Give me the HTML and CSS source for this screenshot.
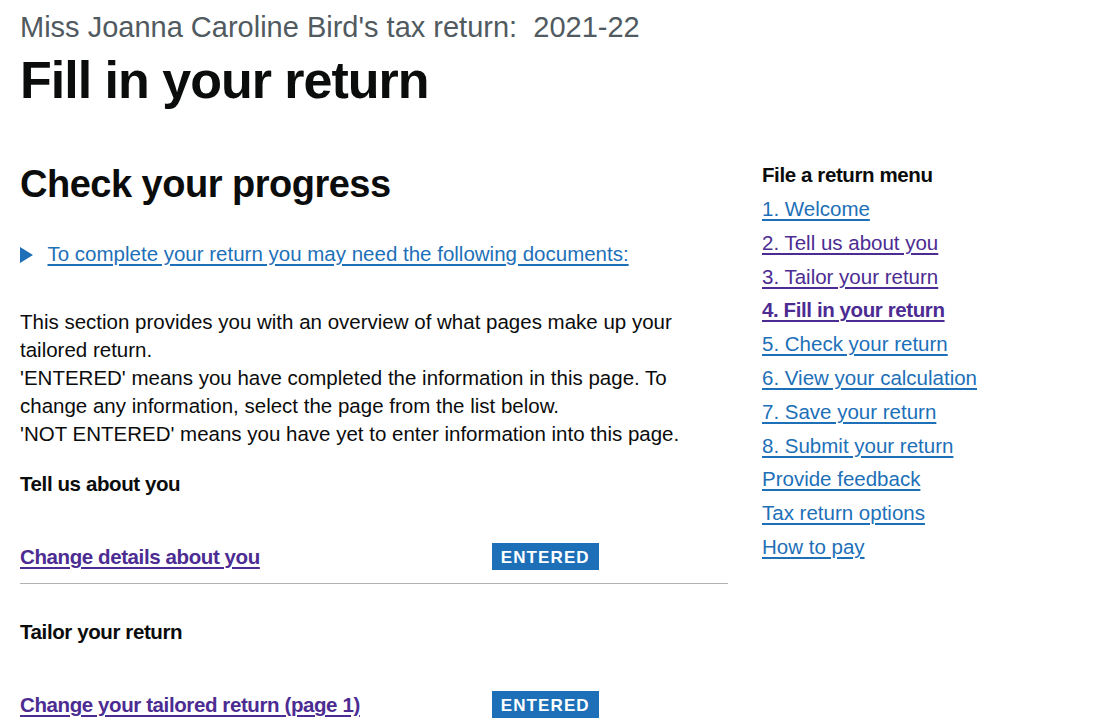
FILE: index.html
```html
<!DOCTYPE html>
<html lang="en">
<head>
    <meta charset="UTF-8">
    <meta name="viewport" content="width=device-width, initial-scale=1.0">
    <title>Fill in your return</title>
    <link rel="stylesheet" href="styles.css">
</head>
<body>
    <div class="page">
        <span class="caption">Miss Joanna Caroline Bird's tax return:&nbsp; 2021-22</span>
        <h1 class="heading-xl">Fill in your return</h1>

        <div class="grid">
            <main class="main-col">
                <h2 class="heading-l">Check your progress</h2>

                <details class="details">
                    <summary class="details-summary">
                        <span class="details-arrow"></span>
                        <span class="details-text">To complete your return you may need the following documents:</span>
                    </summary>
                </details>

                <p class="body-text">
                    This section provides you with an overview of what pages make up your tailored return.<br>
                    'ENTERED' means you have completed the information in this page. To change any information, select the page from the list below.<br>
                    'NOT ENTERED' means you have yet to enter information into this page.
                </p>

                <!-- Task sections -->
                <div class="task-section">
                    <h3 class="heading-s">Tell us about you</h3>
                    <div class="task-row">
                        <a href="#" class="task-link">Change details about you</a>
                        <strong class="tag">Entered</strong>
                    </div>
                </div>

                <div class="task-section">
                    <h3 class="heading-s">Tailor your return</h3>
                    <div class="task-row">
                        <a href="#" class="task-link">Change your tailored return (page 1)</a>
                        <strong class="tag">Entered</strong>
                    </div>
                </div>
            </main>

            <aside class="side-col">
                <h2 class="menu-title">File a return menu</h2>
                <ul class="menu">
                    <li><a href="#" class="link">1. Welcome</a></li>
                    <li><a href="#" class="link visited">2. Tell us about you</a></li>
                    <li><a href="#" class="link visited">3. Tailor your return</a></li>
                    <li><a href="#" class="link visited current">4. Fill in your return</a></li>
                    <li><a href="#" class="link">5. Check your return</a></li>
                    <li><a href="#" class="link">6. View your calculation</a></li>
                    <li><a href="#" class="link">7. Save your return</a></li>
                    <li><a href="#" class="link">8. Submit your return</a></li>
                    <li><a href="#" class="link">Provide feedback</a></li>
                    <li><a href="#" class="link">Tax return options</a></li>
                    <li><a href="#" class="link">How to pay</a></li>
                </ul>
            </aside>
        </div>
    </div>
</body>
</html>
```

FILE: styles.css
```css
body {
    font-family: "Liberation Sans", Arial, sans-serif;
    background-color: #fff;
    color: #0b0c0c;
    margin: 0;
}
.page {
    padding: 11px 20px 0 20px;
}
.caption {
    display: block;
    font-size: 29px;
    line-height: 33px;
    color: #505a5f;
    margin-bottom: 8px;
}
.heading-xl {
    font-size: 52px;
    line-height: 57px;
    font-weight: bold;
    letter-spacing: -1px;
    margin: 0 0 51px;
}
.grid {
    display: grid;
    grid-template-columns: 708px 1fr;
    column-gap: 34px;
}
.heading-l {
    font-size: 38px;
    line-height: 44px;
    font-weight: bold;
    letter-spacing: -0.5px;
    margin: 2px 0 34px;
}

/* Details */
.details {
    margin-bottom: 40px;
}
.details-summary {
    display: flex;
    align-items: center;
    list-style: none;
    cursor: pointer;
    color: #1d70b8;
    font-size: 20.5px;
    line-height: 28px;
}
.details-summary::-webkit-details-marker {
    display: none;
}
.details-arrow {
    width: 0;
    height: 0;
    border-style: solid;
    border-width: 8px 0 8px 13.5px;
    border-color: transparent transparent transparent #1d70b8;
    margin: 2px 14.5px 0 0;
}
.details-text {
    text-decoration: underline;
    text-decoration-thickness: 2px;
    text-underline-offset: 0.16em;
}

.body-text {
    font-size: 20.5px;
    line-height: 28px;
    margin: 0 0 22px;
}

/* Task list */
.heading-s {
    font-size: 20.5px;
    line-height: 28px;
    font-weight: bold;
    letter-spacing: -0.4px;
    margin: 0 0 45px;
}
.task-row {
    display: grid;
    grid-template-columns: 472px auto;
    align-items: start;
    padding-bottom: 12px;
    border-bottom: 1px solid #b1b4b6;
    margin-bottom: 34px;
}
.task-link {
    font-size: 20.5px;
    line-height: 28px;
    font-weight: bold;
    letter-spacing: -0.4px;
    color: #4c2c92;
    text-decoration-thickness: 2px;
    text-underline-offset: 0.16em;
    justify-self: start;
}
.tag {
    justify-self: start;
    margin-top: 0;
    background-color: #1d70b8;
    color: #fff;
    font-size: 17px;
    line-height: 17px;
    font-weight: bold;
    letter-spacing: 1.1px;
    text-transform: uppercase;
    padding: 5.5px 8.8px 4.5px 8.8px;
}

/* Side menu */
.side-col {
    padding-top: 1px;
}
.menu-title {
    font-size: 20.5px;
    line-height: 28px;
    font-weight: bold;
    letter-spacing: -0.4px;
    margin: 0 0 3px;
}
.menu {
    list-style: none;
    margin: 0;
    padding: 0;
}
.menu li {
    font-size: 20.5px;
    line-height: 33.8px;
}
.link {
    color: #1d70b8;
    text-decoration-thickness: 2px;
    text-underline-offset: 0.16em;
}
.link.visited {
    color: #4c2c92;
}
.link.current {
    font-weight: bold;
    letter-spacing: -0.4px;
}
```
